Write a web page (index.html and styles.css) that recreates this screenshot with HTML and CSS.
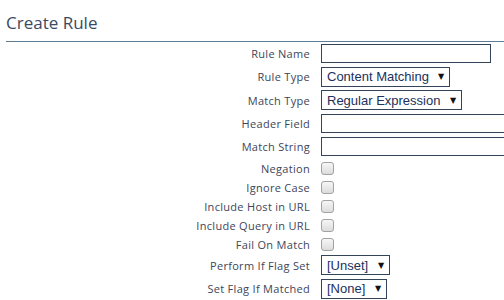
FILE: index.html
```html
<!DOCTYPE html>
<html lang="en">
<head>
  <meta charset="UTF-8">
  <title>Create Rule</title>
  <link rel="stylesheet" href="styles.css">
</head>
<body>
  <div class="panel">
    <h2>Create Rule</h2>

    <form class="rule-form">
      <div class="row">
        <label for="ruleName">Rule Name</label>
        <input id="ruleName" class="text short">
      </div>
      <div class="row">
        <label for="ruleType">Rule Type</label>
        <span class="select">
          <select id="ruleType"><option>Content Matching</option></select>
          <span class="arrow">&#9660;</span>
        </span>
      </div>
      <div class="row">
        <label for="matchType">Match Type</label>
        <span class="select">
          <select id="matchType"><option>Regular Expression</option></select>
          <span class="arrow">&#9660;</span>
        </span>
      </div>
      <div class="row">
        <label for="headerField">Header Field</label>
        <input id="headerField" class="text long">
      </div>
      <div class="row">
        <label for="matchString">Match String</label>
        <input id="matchString" class="text long">
      </div>

      <div class="row check">
        <label for="negation">Negation</label>
        <input id="negation" type="checkbox">
      </div>
      <div class="row check">
        <label for="ignoreCase">Ignore Case</label>
        <input id="ignoreCase" type="checkbox">
      </div>
      <div class="row check">
        <label for="includeHost">Include Host in URL</label>
        <input id="includeHost" type="checkbox">
      </div>
      <div class="row check">
        <label for="includeQuery">Include Query in URL</label>
        <input id="includeQuery" type="checkbox">
      </div>
      <div class="row check">
        <label for="failOnMatch">Fail On Match</label>
        <input id="failOnMatch" type="checkbox">
      </div>

      <div class="row last">
        <label for="performFlag">Perform If Flag Set</label>
        <span class="select">
          <select id="performFlag"><option>[Unset]</option></select>
          <span class="arrow">&#9660;</span>
        </span>
      </div>
      <div class="row last">
        <label for="setFlag">Set Flag If Matched</label>
        <span class="select">
          <select id="setFlag"><option>[None]</option></select>
          <span class="arrow">&#9660;</span>
        </span>
      </div>
    </form>
  </div>
</body>
</html>
```

FILE: styles.css
```css
body {
  margin: 0;
  background: #ffffff;
  font-family: 'Open Sans', sans-serif;
  color: #3c4658;
}
.panel {
  margin-left: 6px;
  height: 300px;
  overflow: hidden;
}
h2 {
  margin: 0;
  height: 42px;
  box-sizing: border-box;
  padding-top: 12px;
  font-size: 17px;
  font-weight: 400;
  line-height: 22px;
  color: #3a4a63;
  border-bottom: 1px solid #5d7d96;
}
.rule-form {
  border-bottom: 2px solid #5d7d96;
}
.row {
  display: flex;
  align-items: center;
  height: 23.33px;
}
.row.check {
  height: 19px;
}
.row.last {
  height: 23.3px;
}
label {
  width: 304px;
  flex: none;
  margin-right: 11px;
  text-align: right;
  font-size: 11px;
  letter-spacing: 0.3px;
  color: #3d4659;
}
.text {
  box-sizing: border-box;
  height: 19px;
  border: 1px solid #34455a;
  padding: 0 4px;
  font-size: 13px;
  flex: none;
}
.text.short {
  width: 170px;
}
.text.long {
  width: 200px;
}
.select {
  display: inline-flex;
  align-items: center;
  box-sizing: border-box;
  height: 20px;
  border: 1px solid #34455a;
  background: #fff;
}
.select select {
  appearance: none;
  -webkit-appearance: none;
  border: none;
  background: transparent;
  padding: 0 0 0 5px;
  margin: 0;
  font-family: 'Liberation Sans', Arial, sans-serif;
  font-size: 13px;
  color: #22305a;
  outline: none;
}
.select .arrow {
  font-family: 'DejaVu Sans', sans-serif;
  font-size: 8px;
  color: #111;
  margin: 0 5px 0 9px;
}
input[type="checkbox"] {
  appearance: none;
  -webkit-appearance: none;
  margin: 0;
  width: 13px;
  height: 13px;
  box-sizing: border-box;
  border: 1px solid #a2a2a2;
  border-radius: 3px;
  background: linear-gradient(#f6f6f6, #dcdcdc);
}
```
